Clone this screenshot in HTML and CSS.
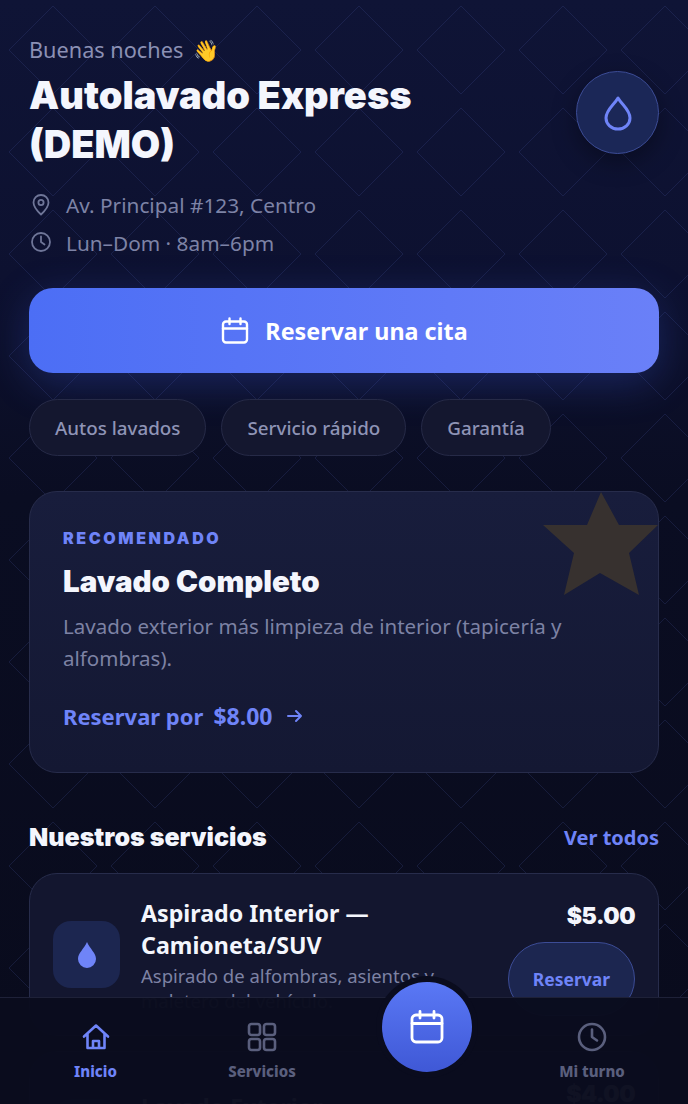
FILE: index.html
```html
<!DOCTYPE html>
<html lang="es">
<head>
    <meta charset="UTF-8">
    <meta name="viewport" content="width=device-width, initial-scale=1.0">
    <title>Autolavado Express (DEMO)</title>
    <link rel="stylesheet" href="styles.css">
</head>
<body>
    <div class="app">
        <!-- Diamond pattern behind everything -->
        <svg class="pattern" width="688" height="1104" aria-hidden="true">
            <defs>
                <pattern id="diamonds" x="2" y="-1" width="102" height="102" patternUnits="userSpaceOnUse">
                    <path d="M51 7 L95 51 L51 95 L7 51 Z" fill="none" stroke="#4a58a8" stroke-opacity="0.2" stroke-width="1"/>
                </pattern>
            </defs>
            <rect width="688" height="1104" fill="url(#diamonds)"/>
        </svg>

        <main class="content">
            <header class="hero">
                <div class="hero-text">
                    <p class="greeting">Buenas noches <span class="wave">👋</span></p>
                    <h1 class="title">Autolavado Express (DEMO)</h1>
                </div>
                <div class="avatar">
                    <svg width="32" height="36" viewBox="0 0 32 36" fill="none" stroke="#6f84f8" stroke-width="3" stroke-linejoin="round">
                        <path d="M16 3 C12 10 4 15 4 23 A12 11 0 0 0 28 23 C28 15 20 10 16 3 Z"/>
                    </svg>
                </div>
            </header>

            <ul class="meta">
                <li>
                    <svg width="24" height="24" viewBox="0 0 24 24" fill="none" stroke="#6f7698" stroke-width="1.8" stroke-linecap="round" stroke-linejoin="round">
                        <path d="M19.5 9.5c0 5-7.500 12-7.500 12s-7.500-7-7.500-12a7.500 7.500 0 0 1 15 0Z"/>
                        <circle cx="12" cy="9.500" r="2.600"/>
                    </svg>
                    <span>Av. Principal #123, Centro</span>
                </li>
                <li>
                    <svg width="24" height="24" viewBox="0 0 24 24" fill="none" stroke="#6f7698" stroke-width="1.8" stroke-linecap="round" stroke-linejoin="round">
                        <circle cx="12" cy="11" r="9"/>
                        <path d="M12 5.500V11l3.500 2.500"/>
                    </svg>
                    <span>Lun–Dom · 8am–6pm</span>
                </li>
            </ul>

            <button class="cta">
                <svg width="30" height="30" viewBox="0 0 30 30" fill="none" stroke="#fff" stroke-width="2.400" stroke-linecap="round" stroke-linejoin="round">
                    <rect x="3" y="5.500" width="24" height="21" rx="3"/>
                    <path d="M3 12.500H27M9.500 2.500V8M20.500 2.500V8"/>
                </svg>
                Reservar una cita
            </button>

            <div class="chips">
                <span class="chip">Autos lavados</span>
                <span class="chip">Servicio rápido</span>
                <span class="chip">Garantía</span>
            </div>

            <section class="featured">
                <svg class="star" width="115" height="103" viewBox="0 0 115 103">
                    <path d="M58 0 L76 33 L115 33 L86 61 L96 103 L57 81 L21 103 L31 61 L0 33 L44 33 Z" fill="#37312f"/>
                </svg>
                <p class="eyebrow">RECOMENDADO</p>
                <h2 class="featured-name">Lavado Completo</h2>
                <p class="featured-desc">Lavado exterior más limpieza de interior (tapicería y alfombras).</p>
                <a class="featured-link">Reservar por <span class="featured-price">$8.00</span>
                    <svg class="arrow" width="20" height="20" viewBox="0 0 20 20" fill="none" stroke="#6f84f8" stroke-width="2" stroke-linecap="round" stroke-linejoin="round">
                        <path d="M3 10H16M11 5l5 5-5 5"/>
                    </svg>
                </a>
            </section>

            <div class="section-head">
                <h2>Nuestros servicios</h2>
                <a>Ver todos</a>
            </div>

            <div class="services">
                <article class="service">
                    <div class="service-icon">
                        <svg width="20" height="28" viewBox="0 0 20 28"><path d="M10 1 C7 8 1 12 1 18 A9 9 0 0 0 19 18 C19 12 13 8 10 1 Z" fill="#6f84f8"/></svg>
                    </div>
                    <div class="service-body">
                        <h3>Aspirado Interior — Camioneta/SUV</h3>
                        <p>Aspirado de alfombras, asientos y maletero del vehículo.</p>
                    </div>
                    <div class="service-side">
                        <strong>$5.00</strong>
                        <button class="book">Reservar</button>
                    </div>
                </article>
                <article class="service">
                    <div class="service-icon">
                        <svg width="20" height="28" viewBox="0 0 20 28"><path d="M10 1 C7 8 1 12 1 18 A9 9 0 0 0 19 18 C19 12 13 8 10 1 Z" fill="#6f84f8"/></svg>
                    </div>
                    <div class="service-body">
                        <h3>Lavado Exterior</h3>
                        <p>Lavado a mano de carrocería, vidrios y llantas del auto.</p>
                    </div>
                    <div class="service-side">
                        <strong>$4.00</strong>
                        <button class="book">Reservar</button>
                    </div>
                </article>
            </div>
        </main>

        <nav class="tabbar">
            <a class="tab active">
                <svg width="30" height="30" viewBox="0 0 30 30" fill="none" stroke="#6f84f8" stroke-width="2.600" stroke-linecap="round" stroke-linejoin="round">
                    <path d="M3 14.500 15 3.500l12 11M6.500 12v14h17V12M12 26v-7h6v7"/>
                </svg>
                Inicio
            </a>
            <a class="tab">
                <svg width="30" height="30" viewBox="0 0 30 30" fill="none" stroke="#5a5f7d" stroke-width="2.600" stroke-linejoin="round">
                    <rect x="2" y="2" width="11" height="11" rx="2.500"/>
                    <rect x="17" y="2" width="11" height="11" rx="2.500"/>
                    <rect x="2" y="17" width="11" height="11" rx="2.500"/>
                    <rect x="17" y="17" width="11" height="11" rx="2.500"/>
                </svg>
                Servicios
            </a>
            <div class="tab-spacer"></div>
            <a class="tab">
                <svg width="30" height="30" viewBox="0 0 30 30" fill="none" stroke="#5a5f7d" stroke-width="2.600" stroke-linecap="round" stroke-linejoin="round">
                    <circle cx="15" cy="15" r="13"/>
                    <path d="M15 7.500V15l5 3.500"/>
                </svg>
                Mi turno
            </a>
            <button class="fab">
                <svg width="36" height="36" viewBox="0 0 36 36" fill="none" stroke="#fff" stroke-width="2.800" stroke-linecap="round" stroke-linejoin="round">
                    <rect x="3" y="6" width="30" height="27" rx="4"/>
                    <path d="M3 14.500H33M11 2.500V9M25 2.500V9"/>
                </svg>
            </button>
        </nav>
    </div>
</body>
</html>
```

FILE: styles.css
```css
/* Basic Reset */
* {
    box-sizing: border-box;
    margin: 0;
    padding: 0;
}

html, body {
    height: 100%;
    overflow: hidden;
}

body {
    font-family: 'Noto Sans', 'Open Sans', sans-serif;
    background: #0a0c1f;
    color: #f1f3fb;
}

.app {
    position: relative;
    height: 100vh;
    overflow: hidden;
    background: linear-gradient(180deg, #0f1436 0%, #0d1130 25%, #0a0d22 45%, #090b1c 100%);
}

.pattern {
    position: absolute;
    top: 0;
    left: 0;
}

.content {
    position: relative;
    padding: 35px 29px 0;
}

/* Header */
.hero {
    display: flex;
    align-items: flex-start;
    justify-content: space-between;
    gap: 28px;
}

.hero-text {
    flex: 1;
}

.greeting {
    font-size: 21.700px;
    line-height: 30px;
    color: #8b90b4;
}

.wave {
    margin-left: 4px;
    font-size: 21px;
}

.title {
    max-width: 440px;
    margin-top: 6px;
    font-family: 'Inter', sans-serif;
    font-size: 38px;
    line-height: 49px;
    font-weight: 900;
    color: #f4f6fd;
}

.avatar {
    flex: none;
    width: 83px;
    height: 83px;
    margin-top: 36px;
    display: flex;
    align-items: center;
    justify-content: center;
    border-radius: 50%;
    background: #1b2757;
    border: 1px solid #3c4c96;
    box-shadow: 0 8px 24px rgba(0, 0, 0, 0.35);
}

.meta {
    margin-top: 17px;
    list-style: none;
}

.meta li {
    display: flex;
    align-items: center;
    gap: 13px;
    height: 38px;
    font-size: 20.800px;
    color: #7d83a6;
}

/* Main button */
.cta {
    width: 100%;
    height: 85px;
    margin-top: 26px;
    display: flex;
    align-items: center;
    justify-content: center;
    gap: 15px;
    border: none;
    border-radius: 24px;
    background: linear-gradient(90deg, #4c6ef5, #6a80f8);
    color: #fff;
    font-family: inherit;
    font-size: 23.300px;
    font-weight: 700;
    box-shadow: 0 10px 40px rgba(60, 90, 220, 0.3);
}

.chips {
    position: relative;
    display: flex;
    gap: 15px;
    margin-top: 26px;
}

.chip {
    height: 57px;
    padding: 0 25px;
    display: flex;
    align-items: center;
    border-radius: 29px;
    background: #14172f;
    border: 1px solid #262a47;
    color: #8f94b6;
    font-size: 18.800px;
    font-weight: 500;
}

/* Recommended card */
.featured {
    position: relative;
    height: 282px;
    margin-top: 35px;
    padding: 35px 33px;
    overflow: hidden;
    border-radius: 28px;
    background: linear-gradient(180deg, #181d3c, #141833);
    border: 1px solid #272c4b;
}

.star {
    position: absolute;
    top: 0;
    right: 0;
}

.eyebrow {
    font-family: 'Inter', sans-serif;
    font-size: 16px;
    line-height: 22px;
    font-weight: 900;
    letter-spacing: 2.600px;
    color: #6f84f8;
}

.featured-name {
    margin-top: 13px;
    font-family: 'Inter', sans-serif;
    font-size: 29.500px;
    line-height: 38px;
    font-weight: 900;
    color: #f4f6fd;
}

.featured-desc {
    margin-top: 10px;
    font-size: 20.500px;
    line-height: 32px;
    color: #7d82a4;
}

.featured-link {
    margin-top: 27px;
    display: flex;
    align-items: center;
    gap: 10px;
    font-size: 22px;
    line-height: 30px;
    font-weight: 700;
    color: #6f84f8;
}

.featured-price {
    font-size: 23px;
}

.arrow {
    margin-left: 3px;
}

.section-head {
    margin-top: 45px;
    display: flex;
    align-items: center;
    justify-content: space-between;
}

.section-head h2 {
    font-family: 'Inter', sans-serif;
    font-size: 25px;
    line-height: 38px;
    font-weight: 900;
    color: #f4f6fd;
}

.section-head a {
    font-size: 20px;
    font-weight: 700;
    color: #6f84f8;
}

/* Service list */
.services {
    margin-top: 17px;
    display: flex;
    flex-direction: column;
    gap: 15px;
}

.service {
    height: 163px;
    padding: 0 23px;
    display: flex;
    align-items: center;
    gap: 21px;
    border-radius: 28px;
    background: #13162f;
    border: 1px solid #272c4b;
}

.service-icon {
    flex: none;
    width: 67px;
    height: 67px;
    display: flex;
    align-items: center;
    justify-content: center;
    border-radius: 18px;
    background: #1c2650;
}

.service-body {
    flex: 1;
}

.service-body h3 {
    font-size: 23.200px;
    line-height: 32px;
    font-weight: 700;
    color: #f4f6fd;
}

.service-body p {
    margin-top: 2px;
    font-size: 18.500px;
    line-height: 25px;
    color: #7d82a4;
}

.service-side {
    flex: none;
    padding-top: 6px;
    display: flex;
    flex-direction: column;
    align-items: flex-end;
    gap: 10px;
}

.service-side strong {
    font-family: 'Inter', sans-serif;
    font-size: 23px;
    line-height: 32px;
    font-weight: 900;
    letter-spacing: -0.5px;
    color: #f4f6fd;
}

.book {
    width: 127px;
    height: 74px;
    border-radius: 37px;
    background: #1c2650;
    border: 1px solid #3c4c96;
    color: #6f84f8;
    font-family: inherit;
    font-size: 17.500px;
    font-weight: 700;
}

/* Bottom navigation */
.tabbar {
    position: absolute;
    left: 0;
    right: 0;
    bottom: 0;
    height: 107px;
    padding: 0 13px;
    display: grid;
    grid-template-columns: 165px 168px 163px 166px;
    background: rgba(10, 12, 30, 0.975);
    border-top: 1px solid #1e2138;
}

.tab {
    padding-top: 24px;
    display: flex;
    flex-direction: column;
    align-items: center;
    gap: 9px;
    font-size: 15px;
    font-weight: 800;
    line-height: 20px;
    color: #5a5f7d;
}

.tab.active {
    color: #6f84f8;
}

.fab {
    position: absolute;
    top: -16px;
    left: 382px;
    width: 90px;
    height: 90px;
    display: flex;
    align-items: center;
    justify-content: center;
    border: none;
    border-radius: 50%;
    background: linear-gradient(180deg, #5a78f5, #3f58d6);
    box-shadow: 0 0 0 6px #0a0c1e;
}
```
